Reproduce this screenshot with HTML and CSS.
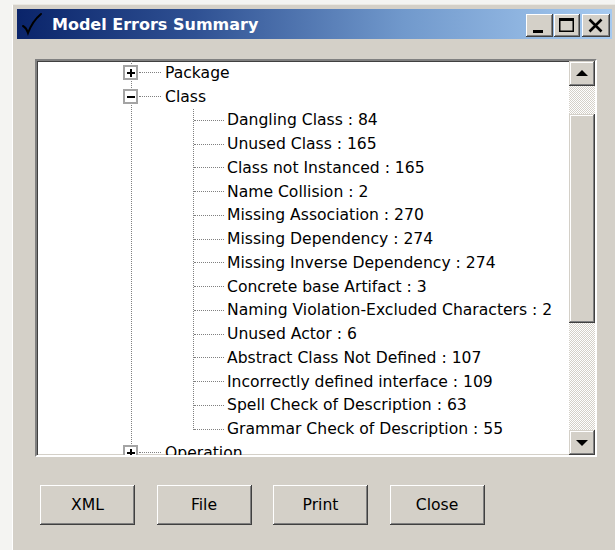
FILE: index.html
```html
<!DOCTYPE html>
<html>
<head>
<meta charset="utf-8">
<title>Model Errors Summary</title>
<link rel="stylesheet" href="styles.css">
</head>
<body>
<div class="window">
  <div class="titlebar">
    <svg class="app-icon" width="24" height="24" viewBox="0 0 24 24">
      <path d="M3 14 C5 15 7 18 8 21 C11 13 15 7 21 2" fill="none" stroke="#000" stroke-width="2" stroke-linecap="round"/>
    </svg>
    <span class="title">Model Errors Summary</span>
    <div class="caption-buttons">
      <button class="cap-btn min" aria-label="Minimize">
        <svg width="27" height="23" viewBox="0 0 27 23"><rect x="7" y="16" width="10" height="3" fill="#000"/></svg>
      </button>
      <button class="cap-btn max" aria-label="Maximize">
        <svg width="26" height="23" viewBox="0 0 26 23"><rect x="5.75" y="4.75" width="13.5" height="12.5" fill="none" stroke="#000" stroke-width="1.5"/><rect x="5" y="4" width="15" height="3" fill="#000"/></svg>
      </button>
      <button class="cap-btn close" aria-label="Close">
        <svg width="28" height="23" viewBox="0 0 28 23"><path d="M7.5 5.5 L19.5 17.5 M19.5 5.5 L7.5 17.5" stroke="#000" stroke-width="2.6"/></svg>
      </button>
    </div>
  </div>

  <div class="client">
    <div class="treebox">
      <div class="viewport">
        <ul class="tree">
          <li class="node"><span class="toggle plus"></span><span class="hline"></span><span class="label">Package</span></li>
          <li class="node"><span class="toggle minus"></span><span class="hline"></span><span class="label">Class</span></li>
          <li>
            <ul class="children">
              <li class="leaf"><span class="hline"></span><span class="label">Dangling Class : 84</span></li>
              <li class="leaf"><span class="hline"></span><span class="label">Unused Class : 165</span></li>
              <li class="leaf"><span class="hline"></span><span class="label">Class not Instanced : 165</span></li>
              <li class="leaf"><span class="hline"></span><span class="label">Name Collision : 2</span></li>
              <li class="leaf"><span class="hline"></span><span class="label">Missing Association : 270</span></li>
              <li class="leaf"><span class="hline"></span><span class="label">Missing Dependency : 274</span></li>
              <li class="leaf"><span class="hline"></span><span class="label">Missing Inverse Dependency : 274</span></li>
              <li class="leaf"><span class="hline"></span><span class="label">Concrete base Artifact : 3</span></li>
              <li class="leaf"><span class="hline"></span><span class="label">Naming Violation-Excluded Characters : 2</span></li>
              <li class="leaf"><span class="hline"></span><span class="label">Unused Actor : 6</span></li>
              <li class="leaf"><span class="hline"></span><span class="label">Abstract Class Not Defined : 107</span></li>
              <li class="leaf"><span class="hline"></span><span class="label">Incorrectly defined interface : 109</span></li>
              <li class="leaf"><span class="hline"></span><span class="label">Spell Check of Description : 63</span></li>
              <li class="leaf"><span class="hline"></span><span class="label">Grammar Check of Description : 55</span></li>
            </ul>
          </li>
          <li class="node"><span class="toggle plus"></span><span class="hline"></span><span class="label">Operation</span></li>
        </ul>
      </div>
      <div class="scrollbar">
        <div class="sb-btn"><span class="arrow up"></span></div>
        <div class="sb-track top"></div>
        <div class="sb-thumb"></div>
        <div class="sb-track bottom"></div>
        <div class="sb-btn"><span class="arrow down"></span></div>
      </div>
    </div>

    <div class="actions">
      <button class="btn">XML</button>
      <button class="btn">File</button>
      <button class="btn">Print</button>
      <button class="btn">Close</button>
    </div>
  </div>
</div>
</body>
</html>
```

FILE: styles.css
```css
html, body {
  margin: 0;
  padding: 0;
  background: #f4f4f2;
  height: 100%;
}

body {
  font-family: "DejaVu Sans", Verdana, sans-serif;
  color: #000;
  overflow: hidden;
}

/* Window frame */
.window {
  margin: 4px 0 0 12px;
  height: 546px;
  box-sizing: border-box;
  background: #d4d0c8;
  border-top: 1px solid #ebe9e3;
  border-left: 1px solid #ffffff;
  padding: 4px 3px 0 4px;
}

/* Caption bar */
.titlebar {
  height: 30px;
  display: flex;
  align-items: center;
  background: linear-gradient(to right, #0a246a 0%, #2f5193 30%, #7199cc 65%, #a6caf0 100%);
  padding: 0 2px 0 3px;
}

.app-icon {
  flex: none;
  margin-right: 8px;
}

.title {
  color: #fff;
  font-family: "DejaVu Sans", Verdana, sans-serif;
  font-weight: bold;
  font-size: 16px;
  flex: 1;
  white-space: nowrap;
  margin-top: 1px;
}

.caption-buttons {
  display: flex;
  align-items: center;
  margin-top: 2px;
}

.cap-btn {
  height: 23px;
  padding: 0;
  border: none;
  background: #d4d0c8;
  display: block;
  box-shadow: inset -1px -1px #404040, inset 1px 1px #ffffff, inset -2px -2px #808080, inset 2px 2px #d4d0c8;
}

.cap-btn svg {
  display: block;
}

.cap-btn.min { width: 27px; }
.cap-btn.max { width: 26px; margin-left: 1px; }
.cap-btn.close { width: 28px; margin-left: 2px; }

/* Client area */
.client {
  padding: 20px 0 0 18px;
}

.treebox {
  width: 562px;
  height: 398px;
  box-sizing: border-box;
  border-style: solid;
  border-width: 2px;
  border-color: #808080 #ffffff #ffffff #808080;
  box-shadow: inset 1px 1px #404040, inset -1px -1px #d4d0c8;
  background: #fff;
  display: flex;
}

.viewport {
  flex: 1;
  overflow: hidden;
}

/* Tree */
.tree,
.children {
  list-style: none;
  margin: 0;
  padding: 0;
}

.tree {
  background-image: repeating-linear-gradient(to bottom, #808080 0 1px, transparent 1px 2px);
  background-size: 1px 100%;
  background-position: 94px 0;
  background-repeat: no-repeat;
  font-size: 15.6px;
}

.node,
.leaf {
  height: 23.75px;
  display: flex;
  align-items: center;
  white-space: nowrap;
}

.node {
  padding-left: 86px;
}

.toggle {
  flex: none;
  width: 15px;
  height: 15px;
  box-sizing: border-box;
  border: 2px solid #a4a4a4;
  background-color: #fff;
  background-repeat: no-repeat;
  background-position: center;
}

.toggle.minus {
  background-image: linear-gradient(#000, #000);
  background-size: 8px 2px;
}

.toggle.plus {
  background-image: linear-gradient(#000, #000), linear-gradient(#000, #000);
  background-size: 8px 2px, 2px 8px;
}

.hline {
  flex: none;
  height: 0;
  border-top: 1px dotted #808080;
}

.node .hline {
  width: 22px;
  margin-left: 1px;
}

.node .label {
  margin-left: 4px;
}

.children {
  background-image: repeating-linear-gradient(to bottom, #808080 0 1px, transparent 1px 2px);
  background-size: 1px calc(100% - 11px);
  background-position: 156px 0;
  background-repeat: no-repeat;
}

.leaf {
  padding-left: 157px;
}

.leaf .hline {
  width: 30px;
}

.leaf .label {
  margin-left: 3px;
}

/* Vertical scroll bar */
.scrollbar {
  flex: none;
  width: 26px;
  display: flex;
  flex-direction: column;
}

.sb-btn,
.sb-thumb {
  background: #d4d0c8;
  box-shadow: inset -1px -1px #404040, inset 1px 1px #d4d0c8, inset -2px -2px #808080, inset 2px 2px #ffffff;
}

.sb-btn {
  height: 25px;
  flex: none;
  display: flex;
  align-items: center;
  justify-content: center;
}

.sb-thumb {
  height: 209px;
  flex: none;
}

.sb-track {
  background-color: #ffffff;
  background-image: repeating-conic-gradient(#d4d0c8 0 25%, #ffffff 0 50%);
  background-size: 2px 2px;
}

.sb-track.top {
  height: 28px;
  flex: none;
}

.sb-track.bottom {
  flex: 1;
}

.arrow {
  width: 0;
  height: 0;
  border-left: 6px solid transparent;
  border-right: 6px solid transparent;
}

.arrow.up {
  border-bottom: 6px solid #000;
  margin-top: -1px;
}

.arrow.down {
  border-top: 6px solid #000;
  margin-top: 1px;
}

/* Dialog buttons */
.actions {
  display: flex;
  gap: 21.5px;
  margin: 28px 0 0 5px;
}

.btn {
  width: 95px;
  height: 40px;
  padding: 0;
  border: none;
  background: #d4d0c8;
  font-family: "DejaVu Sans", Verdana, sans-serif;
  font-size: 15.6px;
  color: #000;
  box-shadow: inset -1px -1px #404040, inset 1px 1px #ffffff, inset -2px -2px #808080, inset 2px 2px #d4d0c8;
}
```
